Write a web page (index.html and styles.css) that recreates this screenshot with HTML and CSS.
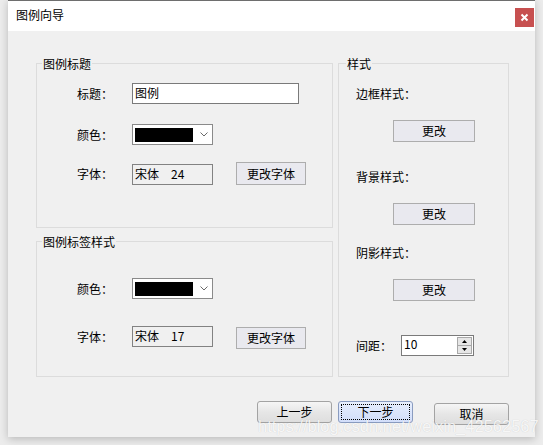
FILE: index.html
```html
<!DOCTYPE html>
<html lang="zh-CN">
<head>
<meta charset="utf-8">
<title>图例向导</title>
<link rel="stylesheet" href="styles.css">
</head>
<body>
<div class="window">
  <div class="titlebar">
    <span class="title">图例向导</span>
    <div class="close"><svg width="9" height="9" viewBox="0 0 9 9"><path d="M1.5 1.5 L7.5 7.5 M7.5 1.5 L1.5 7.5" stroke="#fff" stroke-width="2"/></svg></div>
  </div>
  <div class="content">
    <div class="main">
      <div class="leftcol">
        <div class="group g-title">
          <div class="legend">图例标题</div>
          <div class="row r-title"><span class="label">标题：</span><div class="textbox wide">图例</div></div>
          <div class="row r-color"><span class="label">颜色：</span><div class="combo"><span class="swatch"></span><svg class="chev" width="8" height="5" viewBox="0 0 8 5"><path d="M0.5 0.5 L4 4 L7.5 0.5" fill="none" stroke="#6a6a6a" stroke-width="1"/></svg></div></div>
          <div class="row r-font"><span class="label">字体：</span><div class="textbox ro">宋体<span class="size">24</span></div><div class="btn flat font-btn">更改字体</div></div>
        </div>
        <div class="group g-label">
          <div class="legend">图例标签样式</div>
          <div class="row r-color"><span class="label">颜色：</span><div class="combo"><span class="swatch"></span><svg class="chev" width="8" height="5" viewBox="0 0 8 5"><path d="M0.5 0.5 L4 4 L7.5 0.5" fill="none" stroke="#6a6a6a" stroke-width="1"/></svg></div></div>
          <div class="row r-font"><span class="label">字体：</span><div class="textbox ro">宋体<span class="size">17</span></div><div class="btn flat font-btn">更改字体</div></div>
        </div>
      </div>
      <div class="group g-style">
        <div class="legend">样式</div>
        <div class="slabel s1">边框样式：</div>
        <div class="btn flat change">更改</div>
        <div class="slabel s2">背景样式：</div>
        <div class="btn flat change">更改</div>
        <div class="slabel s3">阴影样式：</div>
        <div class="btn flat change">更改</div>
        <div class="row r-spin">
          <span class="label short">间距：</span>
          <div class="spin">
            <span class="spin-val">10</span>
            <div class="spin-btns">
              <div class="spin-b"><svg width="5" height="3" viewBox="0 0 5 3"><path d="M0 3 L2.5 0 L5 3 Z" fill="#000"/></svg></div>
              <div class="spin-b"><svg width="5" height="3" viewBox="0 0 5 3"><path d="M0 0 L2.5 3 L5 0 Z" fill="#000"/></svg></div>
            </div>
          </div>
        </div>
      </div>
    </div>
    <div class="footer">
      <div class="btn round">上一步</div>
      <div class="btn round primary"><span class="focus">下一步</span></div>
      <div class="btn round cancel">取消</div>
    </div>
  </div>
  <div class="watermark">https://blog.csdn.net/weixin_42562567</div>
</div>
</body>
</html>
```
FILE: styles.css
```css
* { box-sizing: border-box; }
html, body {
  margin: 0;
  padding: 0;
}
body {
  width: 543px;
  height: 445px;
  background: #ececec;
  overflow: hidden;
  font-family: "Noto Sans CJK SC", "Noto Sans", sans-serif;
  font-size: 12px;
  color: #000;
}
.window {
  position: relative;
  margin-left: 8px;
  width: 527px;
  height: 437px;
  border-top: 1px solid #6e6e6e;
  background: #f0f0f0;
  box-shadow: 0 2px 8px rgba(0,0,0,0.22);
}
.titlebar {
  height: 30px;
  background: #fff;
  display: flex;
  align-items: flex-start;
  justify-content: space-between;
}
.title {
  margin: 6px 0 0 8px;
  line-height: 16px;
}
.close {
  margin: 7px 1px 0 0;
  width: 19px;
  height: 19px;
  background: #c75050;
  display: flex;
  align-items: center;
  justify-content: center;
}
.content {
  padding: 32px 26px 0 28px;
}
.main {
  display: flex;
  gap: 5px;
}
.leftcol {
  width: 297px;
  display: flex;
  flex-direction: column;
  gap: 13px;
}
.group {
  border: 1px solid #dcdcdc;
  display: flex;
  flex-direction: column;
}
.legend {
  margin: -8px 0 0 5px;
  height: 16px;
  line-height: 16px;
  padding: 0 1px;
  background: #f0f0f0;
  align-self: flex-start;
}
.g-title { height: 165px; }
.g-label { height: 136px; }
.g-style { width: 171px; height: 314px; }
.g-style .legend { margin-left: 7px; }

.row {
  display: flex;
  align-items: center;
  padding-left: 40px;
}
.label {
  width: 55px;
  line-height: 16px;
}
.g-title .r-title { margin-top: 11px; height: 21px; }
.g-title .r-color { margin-top: 20px; height: 21px; }
.g-title .r-font { margin-top: 17px; height: 23px; align-items: flex-end; }
.g-title .r-font .label { margin-bottom: 3px; }
.g-label .r-color { margin-top: 28px; height: 21px; }
.g-label .r-font { margin-top: 26px; height: 23px; }

.textbox {
  height: 21px;
  border: 1px solid #7a7a7a;
  background: #fff;
  padding-left: 2px;
  line-height: 18px;
  white-space: pre;
}
.textbox.wide { width: 167px; }
.textbox.ro { width: 81px; background: #f0f0f0; border-color: #828282; }
.size { margin-left: 12px; }

.combo {
  width: 81px;
  height: 21px;
  border: 1px solid #8a8a8a;
  background: #fff;
  display: flex;
  align-items: center;
  padding-left: 2px;
}
.swatch {
  width: 58px;
  height: 14px;
  background: #000;
}
.chev { margin-left: 7px; }

.btn {
  display: flex;
  align-items: center;
  justify-content: center;
  line-height: 16px;
}
.btn.flat {
  background: #e9e9ef;
  border: 1px solid #adadad;
}
.font-btn {
  width: 70px;
  height: 23px;
  margin-left: 23px;
}
.g-label .font-btn { height: 22px; margin-top: 2px; }

.slabel {
  padding-left: 17px;
  line-height: 16px;
}
.s1 { margin-top: 14px; }
.s2 { margin-top: 27px; }
.s3 { margin-top: 20px; }
.change {
  width: 82px;
  height: 22px;
  margin: 18px 0 0 54px;
}
.g-style .change:nth-of-type(2) { margin-top: 16px; }
.r-spin {
  padding-left: 17px;
  margin-top: 34px;
  height: 21px;
}
.label.short { width: 45px; }
.spin {
  width: 73px;
  height: 21px;
  border: 1px solid #7a7a7a;
  background: #fff;
  display: flex;
  justify-content: space-between;
  padding: 1px;
}
.spin-val {
  line-height: 14px;
  padding-left: 1px;
}
.spin-btns {
  width: 15px;
  display: flex;
  flex-direction: column;
}
.spin-b {
  flex: 1;
  background: #e6e6e6;
  border: 1px solid #a8a8a8;
  display: flex;
  align-items: center;
  justify-content: center;
}
.spin-b + .spin-b { border-top: none; }

.footer {
  display: flex;
  justify-content: flex-end;
  align-items: flex-start;
  margin-top: 24px;
}
.btn.round {
  width: 75px;
  height: 22px;
  border: 1px solid #a3a3a3;
  border-radius: 3px;
  background: linear-gradient(#f5f5f5, #e6e6e6 50%, #dedede);
  margin-left: 6px;
}
.btn.primary {
  background: linear-gradient(#e8effd, #dbe5fb 50%, #d2defa);
  border-color: #8a9cc0;
  padding: 2px;
}
.focus {
  width: 100%;
  height: 100%;
  border: 1px dotted #000;
  display: flex;
  align-items: center;
  justify-content: center;
}
.btn.cancel {
  margin-left: 21px;
  margin-top: 2px;
}
.watermark {
  position: absolute;
  left: 250px;
  top: 416px;
  font-family: "Liberation Sans", Arial, sans-serif;
  font-size: 16.5px;
  line-height: 19px;
  color: rgba(255,255,255,0.85);
  text-shadow: 0 0 1px rgba(0,0,0,0.18);
  white-space: nowrap;
}
```
